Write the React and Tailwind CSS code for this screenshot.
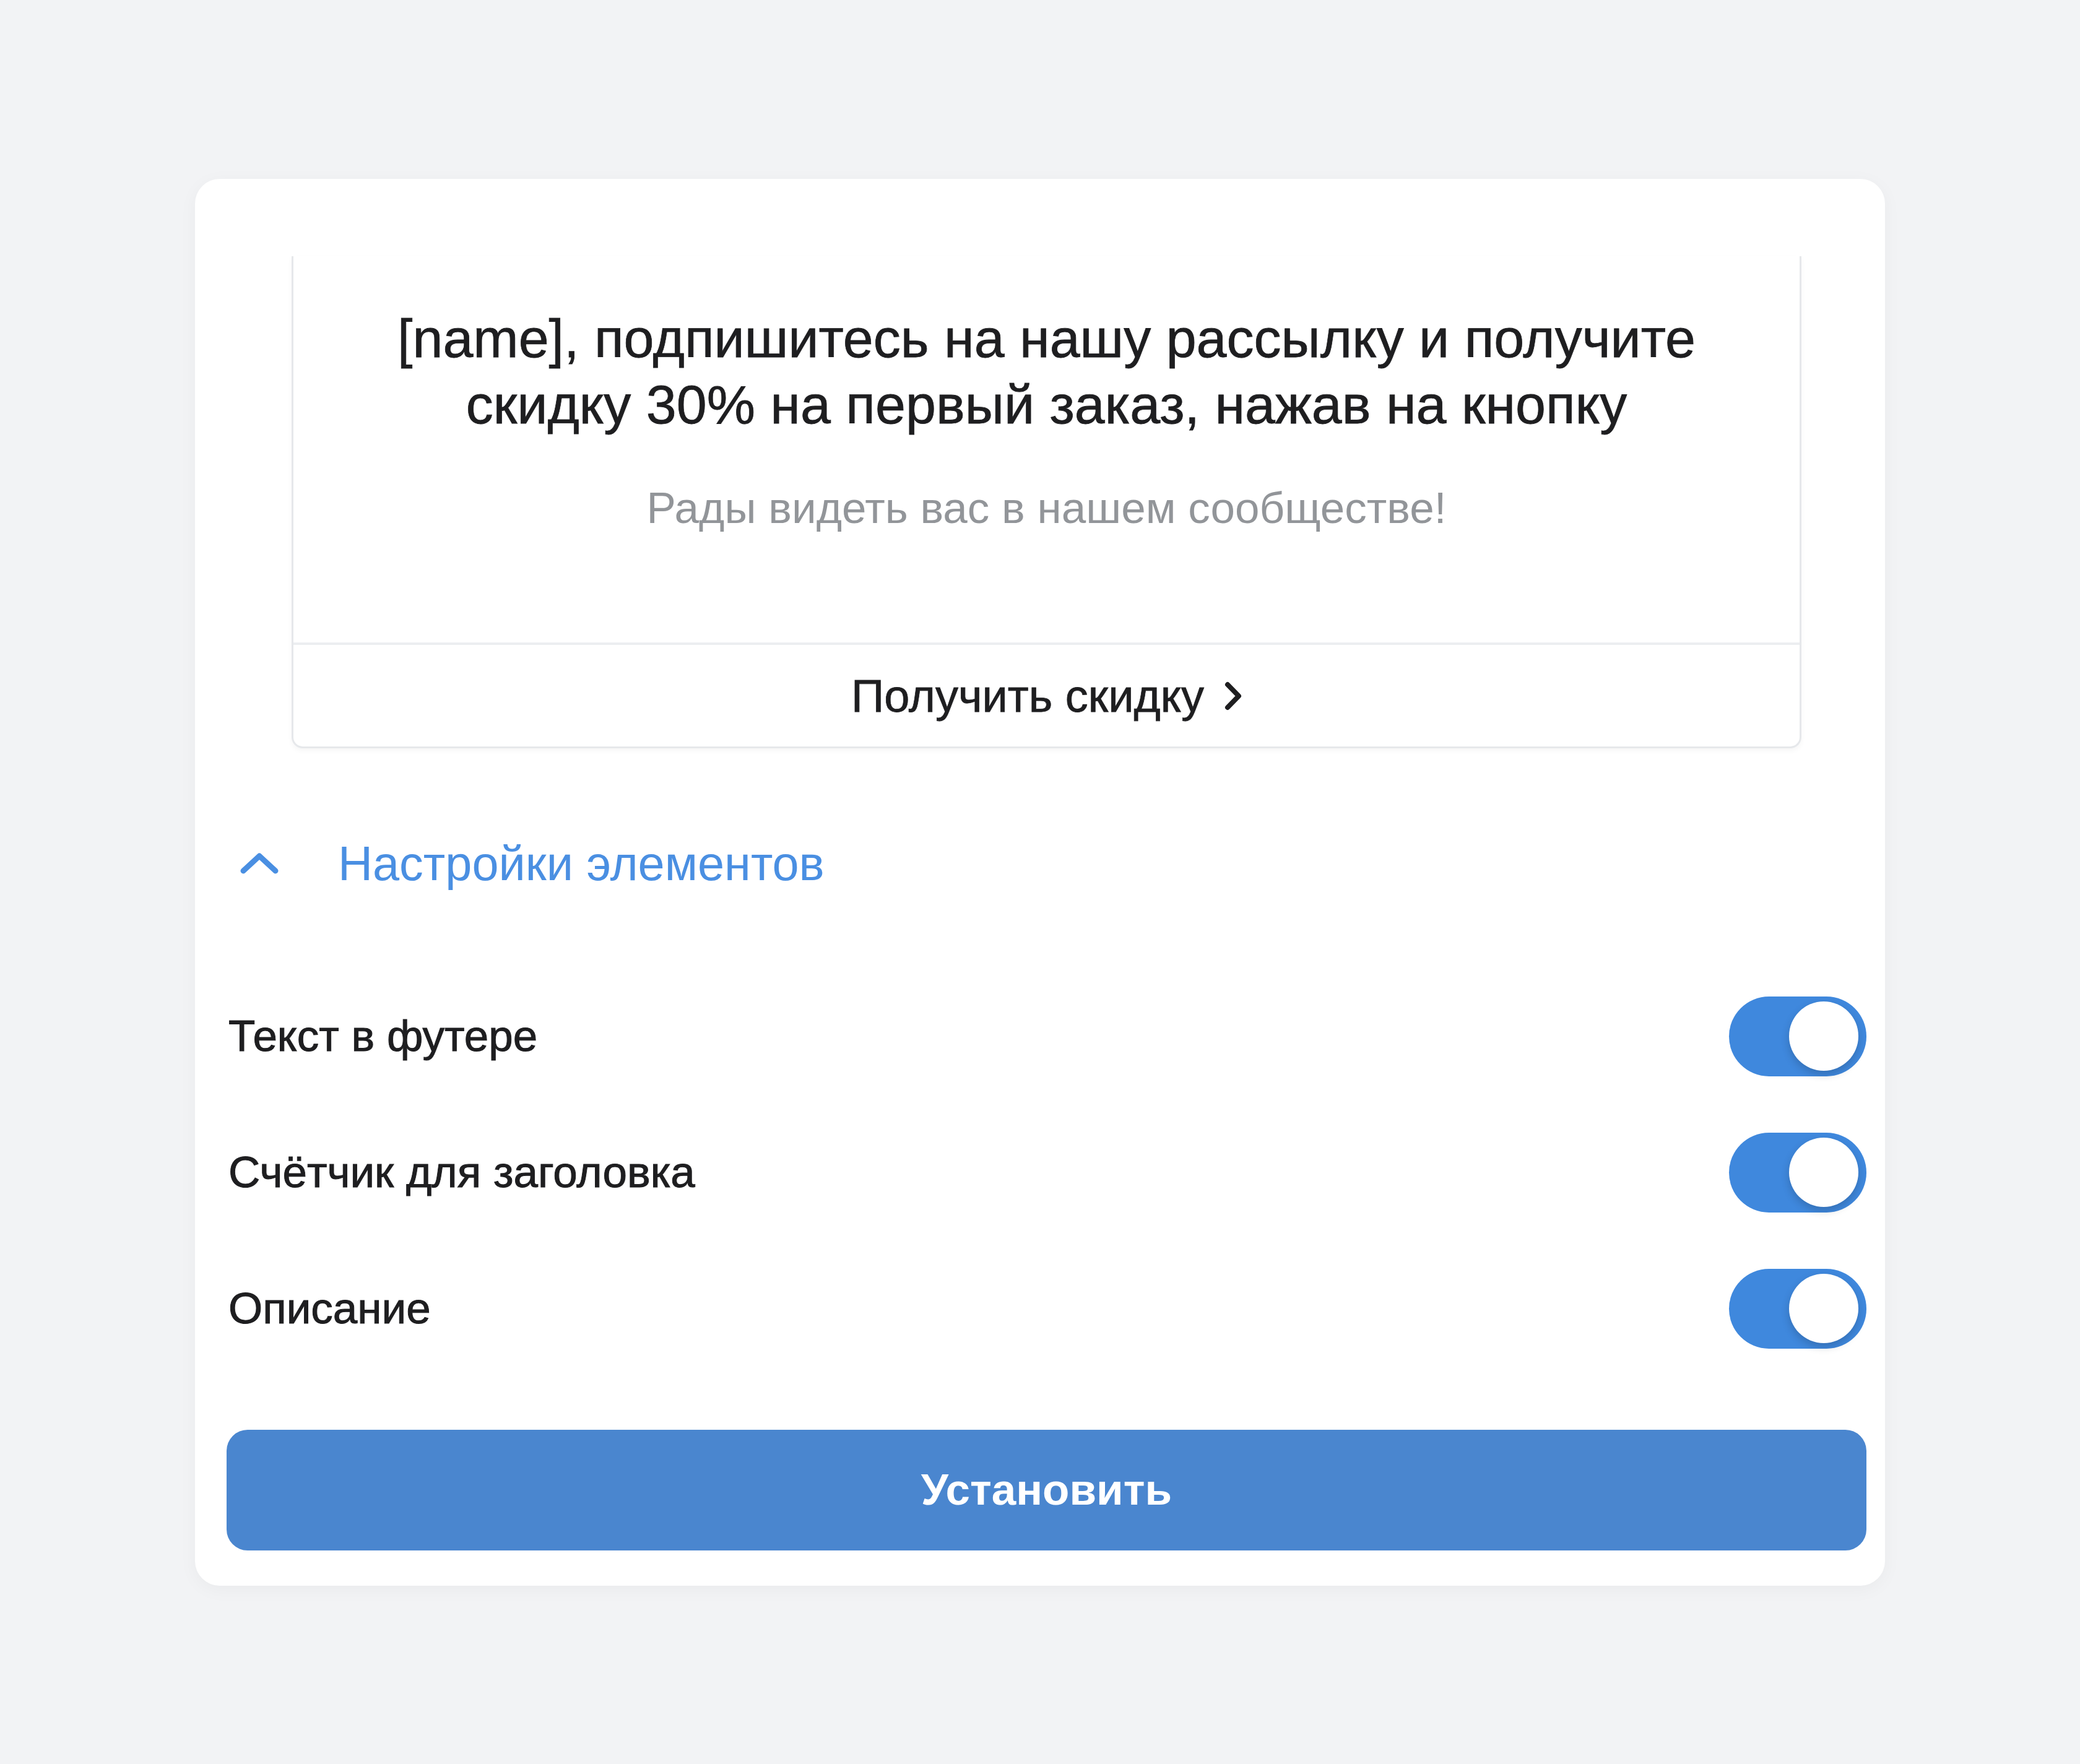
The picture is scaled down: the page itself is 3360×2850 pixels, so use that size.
import { useState } from 'react'

function Toggle({ on, onChange }) {
  return (
    <button
      onClick={onChange}
      className={`relative w-[222px] h-[129px] rounded-full shrink-0 ${on ? 'bg-[#3f88dd]' : 'bg-[#d5d8dd]'}`}
    >
      <span
        className={`absolute top-[8px] w-[112px] h-[112px] rounded-full bg-white shadow-[0_6px_14px_rgba(0,0,0,0.18)] ${on ? 'right-[13px]' : 'left-[13px]'}`}
      />
    </button>
  )
}

export default function App() {
  const [settings, setSettings] = useState({ footer: true, counter: true, desc: true })
  const rows = [
    { key: 'footer', label: 'Текст в футере' },
    { key: 'counter', label: 'Счётчик для заголовка' },
    { key: 'desc', label: 'Описание' },
  ]

  return (
    <div className="min-h-[2850px] bg-[#f2f3f5] flex justify-center pt-[289px] font-['Liberation_Sans',Arial,sans-serif]">
      <div className="w-[2730px] h-[2273px] bg-white rounded-[40px] shadow-[0_6px_30px_rgba(0,0,0,0.04)] pl-[51px] pr-[30px] pt-[125px] pb-[57px] flex flex-col">
        {/* preview */}
        <div className="mx-[105px] h-[795px] border-x-[3px] border-b-[3px] border-[#e6e8eb] rounded-b-[18px] shadow-[0_4px_8px_rgba(0,0,0,0.04)] flex flex-col">
          <div className="flex-1 flex flex-col items-center pt-[79px] text-center">
            <p className="text-[88px] leading-[107px] text-[#1e1e20] [-webkit-text-stroke:0.8px_#1e1e20]">
              [name], подпишитесь на нашу рассылку и получите
              <br />
              скидку 30% на первый заказ, нажав на кнопку
            </p>
            <p className="mt-[69px] text-[71px] leading-[90px] text-[#929599]">Рады видеть вас в нашем сообществе!</p>
          </div>
          <div className="h-[4px] bg-[#eceef1]" />
          <div className="h-[164px] flex items-center justify-center gap-[33px]">
            <span className="text-[74px] text-[#1e1e20] [-webkit-text-stroke:0.8px_#1e1e20]">Получить скидку</span>
            <svg width="28" height="47" viewBox="0 0 28 47" fill="none">
              <path d="M5 5 L23 23.5 L5 42" stroke="#1e1e20" strokeWidth="8" strokeLinecap="round" strokeLinejoin="round" />
            </svg>
          </div>
        </div>

        {/* section header */}
        <div className="mt-[126px] h-[120px] flex items-center">
          <svg width="62" height="34" viewBox="0 0 62 34" fill="none" className="ml-[22px]">
            <path d="M5 29 L31 5 L57 29" stroke="#4a8fe2" strokeWidth="9" strokeLinecap="round" strokeLinejoin="round" />
          </svg>
          <span className="ml-[96px] text-[77.5px] text-[#4a8fe2]">Настройки элементов</span>
        </div>

        {/* rows */}
        <div className="mt-[109px] flex flex-col">
          {rows.map((r) => (
            <div key={r.key} className="h-[220px] flex items-center justify-between pl-[3px]">
              <span className="text-[71px] text-[#1e1e20] [-webkit-text-stroke:1px_#1e1e20]">{r.label}</span>
              <Toggle on={settings[r.key]} onChange={() => setSettings((s) => ({ ...s, [r.key]: !s[r.key] }))} />
            </div>
          ))}
        </div>

        <button className="mt-[86px] h-[195px] w-full rounded-[34px] bg-[#4a86cf] text-white text-[71px] font-bold">
          Установить
        </button>
      </div>
    </div>
  )
}
